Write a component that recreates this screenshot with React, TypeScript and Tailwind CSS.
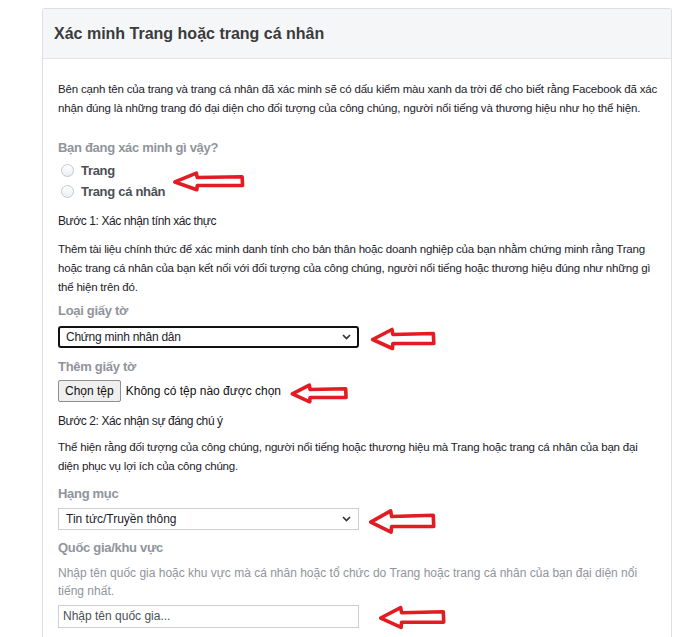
import type { ReactNode } from 'react'

const font = { fontFamily: '"Liberation Sans", Arial, "Noto Sans", sans-serif' }

function RedArrow({ w, h, className = '' }: { w: number; h: number; className?: string }) {
  // hand drawn looking outline arrow, pointing left
  return (
    <svg
      width={w}
      height={h}
      viewBox="0 0 75 24"
      preserveAspectRatio="none"
      className={className}
    >
      <path
        d="M3 12.5 L25 2.5 L26 7.5 L72 6.5 L72.5 16.5 L26 16.5 L25.5 21.5 Z"
        fill="white"
        stroke="#e31b23"
        strokeWidth={3.6}
        strokeLinejoin="round"
        vectorEffect="non-scaling-stroke"
      />
    </svg>
  )
}

function Label({ children, className = '' }: { children: ReactNode; className?: string }) {
  return (
    <div className={`text-[13px] font-bold leading-[18px] tracking-[-0.3px] text-[#90949c] ${className}`}>
      {children}
    </div>
  )
}

function Chevron() {
  return (
    <svg width="9" height="6" viewBox="0 0 9 6" className="shrink-0">
      <path d="M1 1 L4.5 4.5 L8 1" fill="none" stroke="#333" strokeWidth="1.7" />
    </svg>
  )
}

function FakeSelect({ value, focused }: { value: string; focused?: boolean }) {
  return focused ? (
    <div className="flex h-[22px] w-[301px] items-center justify-between rounded-[3px] border-2 border-[#111] pl-[6px] pr-[6px] text-[12px] tracking-[-0.25px] text-[#1d2129]">
      <span>{value}</span>
      <Chevron />
    </div>
  ) : (
    <div className="flex h-[22px] w-[301px] items-center justify-between border border-[#ccd0d5] pl-[7px] pr-[7px] text-[12px] text-[#1d2129]">
      <span>{value}</span>
      <Chevron />
    </div>
  )
}

function Radio({ label }: { label: string }) {
  return (
    <div className="flex h-[21px] items-center gap-[7px]">
      <span className="ml-[3px] h-[13px] w-[13px] rounded-full border border-[#c4c7cc] bg-gradient-to-b from-white to-[#eceef1]" />
      <span className="text-[13px] font-bold tracking-[-0.3px] text-[#4b4f56]">{label}</span>
    </div>
  )
}

export default function App() {
  return (
    <div className="min-h-[637px] bg-white pl-[42px] pr-[16px] pt-[8px]" style={font}>
      <div className="min-h-[629px] rounded-t-[3px] border border-b-0 border-[#dddfe2]">
        <div className="flex h-[50px] items-center border-b border-[#e5e5e5] bg-[#f5f6f7] px-[11px]">
          <h1 className="text-[16px] font-bold text-[#3a3b3c]">Xác minh Trang hoặc trang cá nhân</h1>
        </div>

        <div className="whitespace-nowrap px-[15px] pt-[21px] text-[12px] leading-[19px] text-[#1d2129]">
          <p className="text-[11.5px] tracking-[-0.18px]">
            Bên cạnh tên của trang và trang cá nhân đã xác minh sẽ có dấu kiểm màu xanh da trời để cho biết rằng
            Facebook đã xác
            <br />
            nhận đúng là những trang đó đại diện cho đối tượng của công chúng, người nổi tiếng và thương hiệu như họ
            thể hiện.
          </p>

          <Label className="mt-[21px]">Bạn đang xác minh gì vậy?</Label>
          <div className="relative mt-[3px]">
            <Radio label="Trang" />
            <Radio label="Trang cá nhân" />
            <RedArrow w={73} h={21} className="absolute left-[114px] top-[11px]" />
          </div>

          <p className="mt-[10px] tracking-[-0.4px]">Bước 1: Xác nhận tính xác thực</p>
          <p className="mt-[9px] text-[11.5px] tracking-[-0.2px]">
            Thêm tài liệu chính thức để xác minh danh tính cho bản thân hoặc doanh nghiệp của bạn nhằm chứng minh
            rằng Trang
            <br />
            hoặc trang cá nhân của bạn kết nối với đối tượng của công chúng, người nổi tiếng hoặc thương hiệu đúng như
            những gì
            <br />
            thể hiện trên đó.
          </p>

          <Label className="mt-[5px]">Loại giấy tờ</Label>
          <div className="relative mt-[6px]">
            <FakeSelect value="Chứng minh nhân dân" focused />
            <RedArrow w={66} h={24} className="absolute left-[312px] top-[1px]" />
          </div>

          <Label className="mt-[10px]">Thêm giấy tờ</Label>
          <div className="relative mt-[4px] flex items-center">
            <button className="h-[22px] rounded-[2px] border border-[#8f8f8f] bg-[#efefef] px-[6px] text-[12px] text-[#111]">
              Chọn tệp
            </button>
            <span className="ml-[5px] text-[12px] text-[#111]">Không có tệp nào được chọn</span>
            <RedArrow w={58} h={21} className="absolute left-[232px] top-[3px]" />
          </div>

          <p className="mt-[10px] tracking-[-0.4px]">Bước 2: Xác nhận sự đáng chú ý</p>
          <p className="mt-[7px] text-[11.5px] tracking-[-0.2px]">
            Thể hiện rằng đối tượng của công chúng, người nổi tiếng hoặc thương hiệu mà Trang hoặc trang cá nhân của
            bạn đại
            <br />
            diện phục vụ lợi ích của công chúng.
          </p>

          <Label className="mt-[9px]">Hạng mục</Label>
          <div className="relative mt-[5px]">
            <FakeSelect value="Tin tức/Truyền thông" />
            <RedArrow w={68} h={27} className="absolute left-[310px] top-[0px]" />
          </div>

          <Label className="mt-[9px]">Quốc gia/khu vực</Label>
          <p className="mt-[7px] text-[12px] leading-[18px] text-[#90949c]">
            Nhập tên quốc gia hoặc khu vực mà cá nhân hoặc tổ chức do Trang hoặc trang cá nhân của bạn đại diện nổi
            <br />
            tiếng nhất.
          </p>
          <div className="relative mt-[5px]">
            <div className="flex h-[23px] w-[301px] items-center border border-[#ccd0d5] pl-[4px] text-[12px] text-[#4b4f56]">
              Nhập tên quốc gia...
            </div>
            <RedArrow w={68} h={25} className="absolute left-[320px] top-[0px]" />
          </div>
        </div>
      </div>
    </div>
  )
}
